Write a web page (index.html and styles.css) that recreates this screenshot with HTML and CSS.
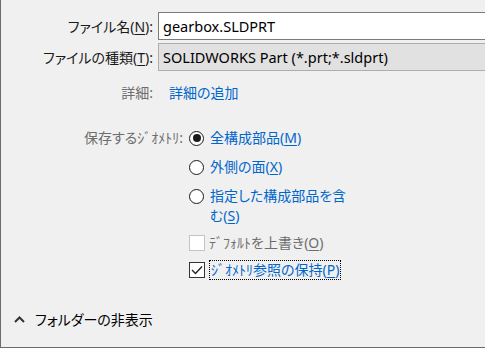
FILE: index.html
```html
<!DOCTYPE html>
<html lang="ja">
<head>
  <meta charset="UTF-8">
  <meta name="viewport" content="width=device-width, initial-scale=1.0">
  <title>名前を付けて保存</title>
  <link rel="stylesheet" href="styles.css">
</head>
<body>
  <div class="dialog">
    <!-- ファイル名と種類 -->
    <div class="file-rows">
      <label class="row-label" for="fileName">ファイル名(<u>N</u>):</label>
      <input class="field" id="fileName" type="text" value="gearbox.SLDPRT">

      <div class="row-label">ファイルの種類(<u>T</u>):</div>
      <div class="field field-select">SOLIDWORKS Part (*.prt;*.sldprt)</div>

      <div class="row-label muted details-label">詳細:</div>
      <a class="link details-link" href="#">詳細の追加</a>
    </div>

    <!-- 保存オプション -->
    <div class="geometry">
      <div class="geometry-label muted">保存するｼﾞｵﾒﾄﾘ:</div>
      <div class="options">
        <div class="option">
          <span class="radio checked"></span>
          <span class="option-text">全構成部品(<u>M</u>)</span>
        </div>
        <div class="option">
          <span class="radio"></span>
          <span class="option-text">外側の面(<u>X</u>)</span>
        </div>
        <div class="option">
          <span class="radio"></span>
          <span class="option-text">指定した構成部品を含<br>む(<u>S</u>)</span>
        </div>
        <div class="option option-check disabled">
          <span class="checkbox"></span>
          <span class="option-text">ﾃﾞﾌｫﾙﾄを上書き(<u>O</u>)</span>
        </div>
        <div class="option option-check">
          <span class="checkbox">
            <svg width="12" height="10" viewBox="0 0 12 10">
              <polyline points="1,5 4.5,8.5 11,1.5" fill="none" stroke="#222" stroke-width="1.4"/>
            </svg>
          </span>
          <span class="option-text focused">ｼﾞｵﾒﾄﾘ参照の保持(<u>P</u>)</span>
        </div>
      </div>
    </div>

    <!-- フォルダーの非表示 -->
    <div class="footer">
      <svg class="chevron" width="11" height="7" viewBox="0 0 11 7">
        <polyline points="1,6 5.5,1.5 10,6" fill="none" stroke="#333" stroke-width="2"/>
      </svg>
      <span>フォルダーの非表示</span>
    </div>
  </div>
</body>
</html>
```

FILE: styles.css
```css
/* 全体 */
body {
  margin: 0;
  padding: 0;
  overflow: hidden;
  background: #f0f0f0;
  font-family: "Noto Sans", "Noto Sans CJK JP", sans-serif;
  font-size: 14px;
  font-feature-settings: "palt";
  color: #1a1a1a;
}

u {
  text-decoration: underline;
  text-underline-offset: 2px;
}

.dialog {
  box-sizing: border-box;
  width: 485px;
  height: 348px;
  border-left: 1px solid #6b6b6b;
  border-bottom: 1px solid #6b6b6b;
  display: flex;
  flex-direction: column;
  overflow: hidden;
}

.muted {
  color: #6d6d6d;
}

.link {
  color: #0066cc;
  text-decoration: none;
}

/* ファイル名と種類 */
.file-rows {
  display: grid;
  grid-template-columns: 152px 400px;
  column-gap: 5px;
  row-gap: 3px;
  align-items: center;
  padding-top: 12px;
}

.row-label {
  text-align: right;
  white-space: nowrap;
}

.field {
  box-sizing: border-box;
  height: 28px;
  margin: 0;
  padding: 0 4px;
  border: 1px solid #7a7a7a;
  background: #fff;
  font: inherit;
  font-size: 14.5px;
  color: #000;
  outline: none;
}

.field-select {
  display: flex;
  align-items: center;
  border-color: #adadad;
  background: #e1e1e1;
}

.details-label {
  margin-top: 8px;
  padding-right: 0;
}

.details-link {
  margin-top: 8px;
  padding-left: 11px;
}

/* 保存オプション */
.geometry {
  display: grid;
  grid-template-columns: 182px 164px;
  column-gap: 6px;
  margin-top: 26px;
}

.geometry-label {
  text-align: right;
  line-height: 20px;
  white-space: nowrap;
}

.options {
  display: flex;
  flex-direction: column;
  gap: 9px;
}

.option {
  display: flex;
  align-items: flex-start;
  gap: 6px;
  line-height: 20px;
  color: #0066cc;
}

.option-check {
  gap: 4px;
  margin-top: -2px;
}

.radio {
  box-sizing: border-box;
  flex: none;
  width: 15px;
  height: 15px;
  margin-top: 2.5px;
  border: 1.5px solid #1a1a1a;
  border-radius: 50%;
  background: #fff;
  display: flex;
  align-items: center;
  justify-content: center;
}

.radio.checked::after {
  content: "";
  width: 8px;
  height: 8px;
  border-radius: 50%;
  background: #1a1a1a;
}

.checkbox {
  box-sizing: border-box;
  flex: none;
  width: 16px;
  height: 16px;
  margin-top: 2px;
  border: 1px solid #333;
  background: #fff;
  display: flex;
  align-items: center;
  justify-content: center;
}

.disabled .checkbox {
  border-color: #c4c4c4;
}

.disabled .option-text {
  color: #6d6d6d;
}

.focused {
  border: 1px dotted #000;
  padding: 0 1px;
  line-height: 18px;
}

/* フォルダーの非表示 */
.footer {
  margin-top: auto;
  height: 52px;
  padding-bottom: 2px;
  display: flex;
  align-items: center;
  gap: 10px;
  padding-left: 13px;
  color: #000;
}
```
